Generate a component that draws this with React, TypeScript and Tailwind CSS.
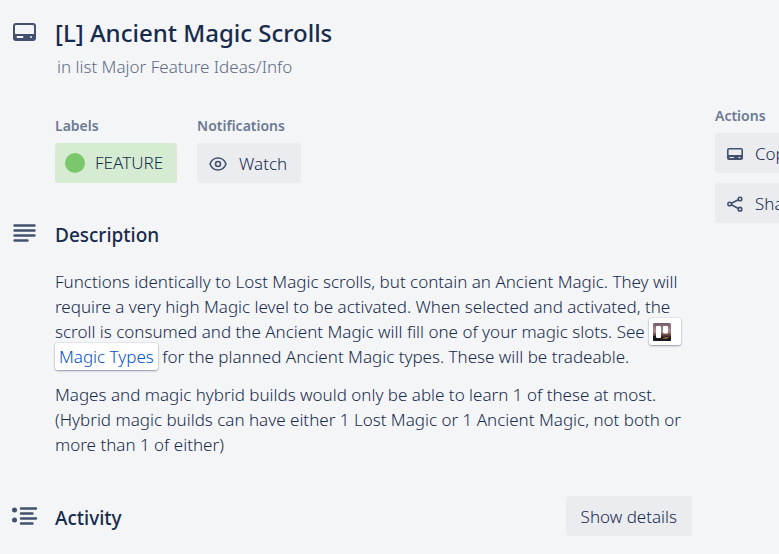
import type { ReactNode } from "react";

function CardIcon({ className }: { className: string }) {
  return (
    <svg viewBox="0 0 24 18" className={className} fill="none" aria-hidden="true">
      <rect x="2" y="1" width="21" height="16" rx="2" stroke="#42526e" strokeWidth="2" />
      <path d="M2 11h21v6H3l-1-1z" fill="#42526e" />
      <rect x="4.500" y="13" width="7" height="2" rx="1" fill="#f4f5f7" />
      <rect x="18" y="13" width="2" height="2" rx="1" fill="#f4f5f7" />
    </svg>
  );
}

function SmallCardIcon() {
  return (
    <svg viewBox="0 0 16 12" className="h-3 w-4 shrink-0" fill="none" aria-hidden="true">
      <rect x="0.800" y="0.800" width="14.400" height="10.400" rx="1.200" stroke="#42526e" strokeWidth="1.600" />
      <path d="M1 7h14v4H1z" fill="#42526e" />
      <path d="M3 9.500h3.500M12 9.500h1" stroke="#ebecf0" strokeWidth="1.200" strokeLinecap="round" />
    </svg>
  );
}

function EyeIcon() {
  return (
    <svg viewBox="0 0 18 14" className="h-3.5 w-[18px]" fill="none" stroke="#42526e" strokeWidth="1.6" aria-hidden="true">
      <path d="M1 7C2.500 3 5.500 1 9 1S15.500 3 17 7c-1.500 4-4.500 6-8 6S2.500 11 1 7z" strokeLinejoin="round" />
      <circle cx="9" cy="7" r="2.500" />
    </svg>
  );
}

function ShareIcon() {
  return (
    <svg viewBox="0 0 16 16" className="size-4 shrink-0" fill="none" stroke="#42526e" strokeWidth="1.600" aria-hidden="true">
      <path d="M4.500 7.200 11.300 3.700M4.500 8.800l6.800 3.700" />
      <circle cx="2.700" cy="8" r="1.800" />
      <circle cx="13" cy="3" r="1.800" />
      <circle cx="13" cy="13.200" r="1.800" />
    </svg>
  );
}

function DescriptionIcon() {
  return (
    <svg viewBox="0 0 24 18" className="h-[18px] w-6" stroke="#42526e" strokeWidth="2.400" strokeLinecap="round" aria-hidden="true">
      <path d="M2.500 1.500h20M2.500 6.500h20M2.500 11.500h20M2.500 16.500h13" />
    </svg>
  );
}

function ActivityIcon() {
  return (
    <svg viewBox="0 0 26 18" className="h-[18px] w-[26px]" aria-hidden="true">
      <circle cx="2.500" cy="3" r="2.500" fill="#42526e" />
      <circle cx="2.500" cy="13" r="2.500" fill="#42526e" />
      <path d="M9 1.500h15M9 6.500h11.500M9 11.500h15M9 16.500h11.500" stroke="#42526e" strokeWidth="2.400" strokeLinecap="round" />
    </svg>
  );
}

function BoardThumbnail() {
  return (
    <svg viewBox="0 0 18 18" className="mr-1.5 inline size-[18px] align-[-3px]" aria-hidden="true">
      <defs>
        <linearGradient id="dusk" x1="0" y1="0" x2="0" y2="1">
          <stop offset="0" stopColor="#6f5a70" />
          <stop offset="0.450" stopColor="#b58a90" />
          <stop offset="0.650" stopColor="#6d4a45" />
          <stop offset="0.800" stopColor="#1f1d24" />
          <stop offset="1" stopColor="#15161d" />
        </linearGradient>
      </defs>
      <rect width="18" height="18" rx="1.500" fill="url(#dusk)" />
      <path d="M0 13l6 1 5 2 7-2v2.500q0 1.500-1.500 1.500h-15Q0 18 0 16.500z" fill="#17171f" />
      <path d="M9 15.500l4-1.500 4 .5-5 1.500z" fill="#a8672f" />
      <rect x="3" y="3" width="5" height="12" rx="1" fill="#fff" />
      <rect x="10" y="3" width="5" height="7.500" rx="1" fill="#fff" />
    </svg>
  );
}

function SectionHeader({ icon, title, children }: { icon: ReactNode; title: string; children?: ReactNode }) {
  return (
    <div className="flex h-10 items-center">
      <span className="flex w-[43px] shrink-0">{icon}</span>
      <h3 className="flex-1 pt-1 text-[19px] leading-6 font-medium">{title}</h3>
      {children}
    </div>
  );
}

function SmallHeading({ children }: { children: ReactNode }) {
  return <h3 className="mb-[5px] text-[14px] leading-6 font-semibold text-[#6b7a93]">{children}</h3>;
}

const grayButton = "flex h-10 items-center rounded-[3px] bg-[#ebecf0] pt-0.5 text-[17px] font-light";

export default function App() {
  return (
    <div className="min-h-screen overflow-hidden bg-[#f4f5f7] font-['Noto_Sans','Open_Sans',sans-serif] text-[#172b4d]">
      <header className="flex pt-4 pl-3">
        <span className="flex h-8 w-[43px] shrink-0 items-center">
          <CardIcon className="h-[18px] w-6" />
        </span>
        <div>
          <h2 className="pt-px text-[24px] leading-8 font-medium">[L] Ancient Magic Scrolls</h2>
          <p className="mt-1 pl-0.5 text-[17px] leading-7 font-light text-[#5e6c84]">in list Major Feature Ideas/Info</p>
        </div>
      </header>

      <div className="mt-[23px] flex gap-[23px] pl-3">
        <main className="min-w-0 flex-1 pt-2.5">
          <div className="flex gap-5 pl-[43px]">
            <section>
              <SmallHeading>Labels</SmallHeading>
              <button type="button" className="flex h-10 items-center gap-2.5 rounded-[3px] bg-[#d6ecd2] pr-3.5 pl-2.5 text-[17px] font-light">
                <span className="size-5 rounded-full bg-[#7bc86c]" />
                FEATURE
              </button>
            </section>
            <section>
              <SmallHeading>Notifications</SmallHeading>
              <button type="button" className={`${grayButton} gap-3 pr-3.5 pl-3`}>
                <EyeIcon />
                Watch
              </button>
            </section>
          </div>

          <section className="mt-[30px]">
            <SectionHeader icon={<DescriptionIcon />} title="Description" />
            <div className="mt-4 space-y-[13px] pl-[43px] text-[17px] leading-[25px] font-light">
              <p>
                Functions identically to Lost Magic scrolls, but contain an Ancient Magic. They will require a very high Magic level to be activated. When selected and activated, the scroll is consumed and the Ancient Magic will fill one of your magic slots. See{" "}
                <a href="#magic-types" className="rounded-[3px] bg-white box-decoration-clone px-1 py-0.5 text-[#0052cc] shadow-[0_1px_2px_#091e4266,0_0_1px_#091e4280]">
                  <BoardThumbnail /> Magic Types
                </a>{" "}
                for the planned Ancient Magic types. These will be tradeable.
              </p>
              <p>
                Mages and magic hybrid builds would only be able to learn 1 of these at most. (Hybrid magic builds can have either 1 Lost Magic or 1 Ancient Magic, not both or more than 1 of either)
              </p>
            </div>
          </section>

          <section className="mt-[39px]">
            <SectionHeader icon={<ActivityIcon />} title="Activity">
              <button type="button" className={`${grayButton} px-[15px]`}>Show details</button>
            </SectionHeader>
          </section>
        </main>

        <aside className="-mr-36 w-52 shrink-0">
          <SmallHeading>Actions</SmallHeading>
          <div className="space-y-2.5">
            <button type="button" className={`${grayButton} w-full gap-3 px-3`}>
              <SmallCardIcon />
              Copy
            </button>
            <button type="button" className={`${grayButton} w-full gap-3 px-3`}>
              <ShareIcon />
              Share
            </button>
          </div>
        </aside>
      </div>
    </div>
  );
}
